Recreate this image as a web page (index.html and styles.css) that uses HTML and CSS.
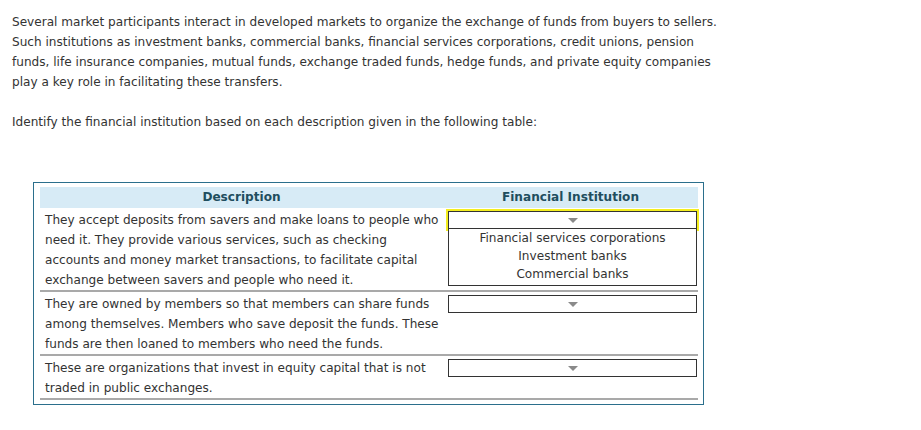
FILE: index.html
```html
<!DOCTYPE html>
<html>
<head>
<meta charset="utf-8">
<link rel="stylesheet" href="styles.css">
</head>
<body>
<div class="page">
  <p class="para">Several market participants interact in developed markets to organize the exchange of funds from buyers to sellers. Such institutions as investment banks, commercial banks, financial services corporations, credit unions, pension funds, life insurance companies, mutual funds, exchange traded funds, hedge funds, and private equity companies play a key role in facilitating these transfers.</p>
  <p class="para">Identify the financial institution based on each description given in the following table:</p>
  <div class="box">
    <table class="qtable">
      <thead>
        <tr><th class="c1">Description</th><th class="c2">Financial Institution</th></tr>
      </thead>
      <tbody>
        <tr>
          <td class="c1">They accept deposits from savers and make loans to people who need it. They provide various services, such as checking accounts and money market transactions, to facilitate capital exchange between savers and people who need it.</td>
          <td class="c2">
            <div class="sel-wrap">
              <div class="sel focused"><span class="arrow"></span></div>
              <ul class="menu">
                <li>Financial services corporations</li>
                <li>Investment banks</li>
                <li>Commercial banks</li>
              </ul>
            </div>
          </td>
        </tr>
        <tr>
          <td class="c1">They are owned by members so that members can share funds among themselves. Members who save deposit the funds. These funds are then loaned to members who need the funds.</td>
          <td class="c2"><div class="sel-wrap"><div class="sel"><span class="arrow"></span></div></div></td>
        </tr>
        <tr>
          <td class="c1">These are organizations that invest in equity capital that is not traded in public exchanges.</td>
          <td class="c2"><div class="sel-wrap"><div class="sel"><span class="arrow"></span></div></div></td>
        </tr>
      </tbody>
    </table>
  </div>
</div>
</body>
</html>
```
FILE: styles.css
```css
html, body {
  margin: 0;
  padding: 0;
  background: #ffffff;
}
body {
  font-family: "DejaVu Sans", Verdana, sans-serif;
  font-size: 12.1px;
  line-height: 20px;
  color: #333333;
}
.page {
  padding: 12px 12px;
}
.para {
  margin: 0 0 20px 0;
  width: 712px;
}
.box {
  margin-top: 50px;
  margin-left: 21px;
  width: 658px;
  border: 1px solid #2b6f8c;
  padding: 4px 5px 4px 6px;
}
.qtable {
  width: 658px;
  border-collapse: collapse;
  table-layout: fixed;
}
.qtable th {
  background: #d7ebf6;
  color: #1f4e5e;
  font-weight: bold;
  text-align: center;
  height: 21px;
  padding: 0;
  line-height: 21px;
}
.qtable th.c1 {
  width: 403px;
}
.qtable td {
  vertical-align: top;
  border-bottom: 2px solid #a9a9a9;
  padding: 2px 0 0 0;
}
.qtable td.c1 {
  padding-left: 5px;
  padding-right: 3px;
}
.qtable td.c2 {
  padding-left: 5px;
  padding-right: 1px;
  padding-top: 3px;
}
.sel-wrap {
  position: relative;
}
.sel {
  height: 16px;
  border: 1px solid #333333;
  background: #ffffff;
  display: flex;
  align-items: center;
  justify-content: center;
}
.sel.focused {
  box-shadow: 0 0 0 2px #f4ee20;
}
.arrow {
  width: 0;
  height: 0;
  margin-top: 1px;
  border-left: 5px solid transparent;
  border-right: 5px solid transparent;
  border-top: 5px solid #8a8a8a;
}
.menu {
  position: absolute;
  left: 0;
  right: 0;
  top: 18px;
  margin: 0;
  padding: 0 0 2px 0;
  list-style: none;
  border: 1px solid #333333;
  border-top: none;
  background: #ffffff;
  text-align: center;
  line-height: 18px;
}
.menu li {
  margin: 0;
}
```
